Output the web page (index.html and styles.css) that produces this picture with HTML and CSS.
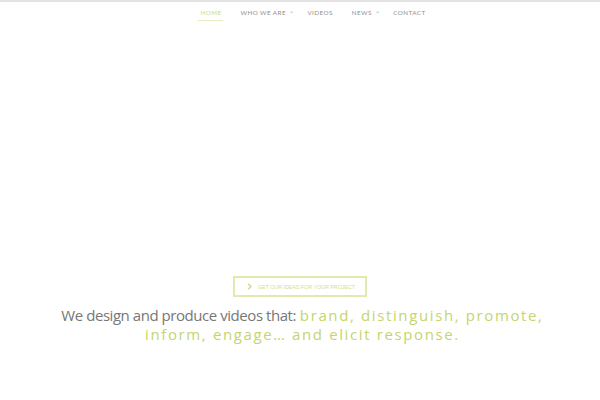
FILE: index.html
```html
<!DOCTYPE html>
<html>
<head>
<meta charset="utf-8">
<link rel="stylesheet" href="styles.css">
</head>
<body>
<header class="topbar">
  <nav class="menu">
    <a class="item active">HOME</a>
    <a class="item drop">WHO WE ARE <span class="caret">&#8964;</span></a>
    <a class="item">VIDEOS</a>
    <a class="item drop">NEWS <span class="caret">&#8964;</span></a>
    <a class="item">CONTACT</a>
  </nav>
</header>
<main class="hero">
  <a class="cta"><svg class="chev" width="5" height="7" viewBox="0 0 5 7"><path d="M1 0.8 L4 3.5 L1 6.2" fill="none" stroke="#c9da86" stroke-width="1.3"/></svg><span>GET OUR IDEAS FOR YOUR PROJECT</span></a>
  <h1 class="tagline"><span class="grey">We design and produce videos that:</span> <span class="green">brand, distinguish, promote,</span><br><span class="green">inform, engage… and elicit response.</span></h1>
</main>
</body>
</html>
```
FILE: styles.css
```css
html, body { margin: 0; padding: 0; background: #fff; }
body { width: 600px; height: 400px; overflow: hidden; font-family: "Lato", "Open Sans", sans-serif; }
.topbar { border-top: 2px solid #e2e2e2; height: 22px; display: flex; justify-content: center; }
.menu { display: flex; align-items: flex-start; padding-top: 7px; margin-left: 26px; }
.item { font-size: 6.3px; letter-spacing: 0.42px; color: #8f8f8f; margin-right: 19px; line-height: 8px; padding-bottom: 3px; white-space: nowrap; }
.item.drop { margin-right: 13px; }
.item.active { color: #c9db7e; border-bottom: 1px solid #e6efc0; padding: 0 2px 3px; margin-left: -2px; margin-right: 17px; }
.caret { font-size: 6px; position: relative; top: -2px; margin-left: 1px; color: #a0a0a0; }
.item:last-child { margin-right: 0; }
.hero { display: flex; flex-direction: column; align-items: center; padding-top: 252px; }
.cta { display: flex; align-items: center; border: 2px solid #dfeaaf; height: 17px; padding: 0 10px 0 12px; }
.chev { margin-right: 6px; }
.cta span { font-family: "Liberation Sans", sans-serif; font-size: 5.4px; color: #cfdf94; letter-spacing: -0.05px; }
.tagline { margin: 9px 0 0 5px; text-align: center; font-family: "Open Sans", sans-serif; font-weight: 400; font-size: 15px; line-height: 19px; width: 520px; }
.grey { color: #777; letter-spacing: -0.45px; }
.green { color: #c4d56e; letter-spacing: 1.62px; }
```
